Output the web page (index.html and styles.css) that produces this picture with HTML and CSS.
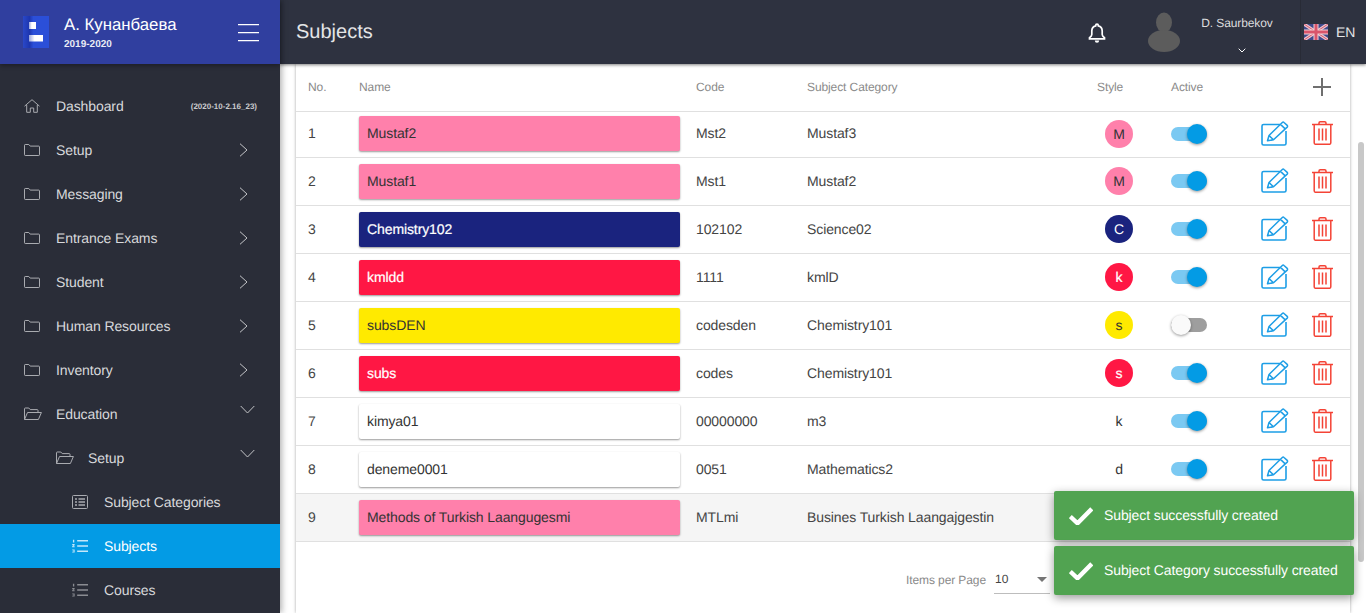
FILE: index.html
```html
<!DOCTYPE html>
<html lang="en">
<head>
<meta charset="utf-8">
<title>Subjects</title>
<link rel="stylesheet" href="styles.css">
</head>
<body>
<svg class="defs" width="0" height="0" aria-hidden="true">
  <symbol id="i-folder" viewBox="0 0 16 12"><path d="M.5 2V1.200C.5.800.8.500 1.200.500h3.600l1.400 1.600h8.600c.4 0 .7.300.7.700v8c0 .4-.3.700-.7.700H1.200c-.4 0-.7-.3-.7-.7z" fill="none" stroke="currentColor"/></symbol>
  <symbol id="i-open" viewBox="0 0 18 13"><path d="M.5 12V1.200C.5.800.8.500 1.200.500h3.600l1.400 1.600h7.100c.4 0 .7.300.7.700V5M.5 12l3-7h13.900l-3 7z" fill="none" stroke="currentColor" stroke-linejoin="round"/></symbol>
  <symbol id="i-chev-r" viewBox="0 0 9 14"><path d="M1 .7 8 7l-7 6.300" fill="none" stroke="currentColor" stroke-width="1"/></symbol>
  <symbol id="i-chev-d" viewBox="0 0 15 9"><path d="M.7 1 7.500 8l6.800-7" fill="none" stroke="currentColor" stroke-width="1"/></symbol>
  <symbol id="i-ol" viewBox="0 0 17 14"><path d="M5.500 1.500H17M5.500 7H17M5.500 12.500H17" stroke="currentColor" stroke-width="1.600" fill="none"/><path d="M1 .3h1.400v3H1zM.2 5h2.600v1.100L1.400 7.200h1.400v1H.2V7.300l1.400-1.200H.2zM.2 10.800h2.600v3.200H.2v-.8h1.600v-.5H.8v-.7h1v-.4H.2z" fill="currentColor"/></symbol>
  <symbol id="i-edit" viewBox="0 0 28 25"><path d="M19 3.500H2.600C1.700 3.500 1 4.200 1 5.100v17.300c0 .9.700 1.600 1.600 1.600h20.800c.9 0 1.600-.7 1.600-1.600V10" fill="none" stroke="currentColor" stroke-width="1.600"/><path d="M6.500 19.800 8 14.500 21.300 1.500c.5-.5 1.200-.5 1.700 0l3.200 2.900c.5.500.5 1.200 0 1.700L12.500 18.800zM8 14.500l4.500 4.300M19.500 3.400l4.700 4.500" fill="none" stroke="currentColor" stroke-width="1.500" stroke-linejoin="round"/></symbol>
  <symbol id="i-trash" viewBox="0 0 21 24"><path d="M0 3.500h21M7 3.500V2.100C7 1.400 7.600.8 8.300.8h4.400c.7 0 1.300.6 1.300 1.300v1.400M2.200 3.500v18.200c0 .9.700 1.600 1.600 1.600h13.400c.9 0 1.600-.7 1.600-1.600V3.500M7 7.500v12M10.500 7.500v12M14 7.500v12" fill="none" stroke="currentColor" stroke-width="1.500"/></symbol>
  <symbol id="i-check" viewBox="0 0 24 18"><path d="M1.300 9.500 8.500 16.300 22.800 1.800" fill="none" stroke="currentColor" stroke-width="4.400"/></symbol>
</svg>

<div class="app">
  <aside class="sidebar">
    <div class="brand">
      <svg class="logo" viewBox="0 0 26 32">
        <defs><linearGradient id="lg" x1="0" x2="1" y1="0" y2="0"><stop offset="0" stop-color="#2a48c8"/><stop offset=".25" stop-color="#1d36b0"/><stop offset=".4" stop-color="#2b4fd8"/></linearGradient>
        <linearGradient id="lw" x1="0" x2="1" y1="0" y2="0"><stop offset="0" stop-color="#9aa6de"/><stop offset=".4" stop-color="#fff"/></linearGradient></defs>
        <rect width="26" height="32" fill="url(#lg)"/>
        <rect x="6" y="6" width="7" height="7" fill="url(#lw)"/>
        <rect x="6" y="19" width="14" height="6.500" fill="url(#lw)"/>
      </svg>
      <div class="brand-text">
        <div class="brand-name">А. Кунанбаева</div>
        <div class="brand-year">2019-2020</div>
      </div>
      <div class="burger"><i></i><i></i><i></i></div>
    </div>
    <nav class="menu">
      <a class="item">
        <svg class="ico" viewBox="0 0 16 14"><path d="M.5 7.200 8 .7l7.500 6.500M2.700 6v7.300h3.600V9h3.400v4.300h3.600V6" fill="none" stroke="currentColor"/></svg>
        <span class="label">Dashboard</span><span class="version">(2020-10-2.16_23)</span>
      </a>
      <a class="item"><svg class="ico"><use href="#i-folder"/></svg><span class="label">Setup</span><svg class="chev-r"><use href="#i-chev-r"/></svg></a>
      <a class="item"><svg class="ico"><use href="#i-folder"/></svg><span class="label">Messaging</span><svg class="chev-r"><use href="#i-chev-r"/></svg></a>
      <a class="item"><svg class="ico"><use href="#i-folder"/></svg><span class="label">Entrance Exams</span><svg class="chev-r"><use href="#i-chev-r"/></svg></a>
      <a class="item"><svg class="ico"><use href="#i-folder"/></svg><span class="label">Student</span><svg class="chev-r"><use href="#i-chev-r"/></svg></a>
      <a class="item"><svg class="ico"><use href="#i-folder"/></svg><span class="label">Human Resources</span><svg class="chev-r"><use href="#i-chev-r"/></svg></a>
      <a class="item"><svg class="ico"><use href="#i-folder"/></svg><span class="label">Inventory</span><svg class="chev-r"><use href="#i-chev-r"/></svg></a>
      <a class="item"><svg class="ico ico-open"><use href="#i-open"/></svg><span class="label">Education</span><svg class="chev-d"><use href="#i-chev-d"/></svg></a>
      <a class="item lvl2"><svg class="ico ico-open"><use href="#i-open"/></svg><span class="label">Setup</span><svg class="chev-d"><use href="#i-chev-d"/></svg></a>
      <a class="item lvl3">
        <svg class="ico" viewBox="0 0 16 14"><rect x=".5" y=".5" width="15" height="13" rx="1" fill="none" stroke="currentColor"/><path d="M3 4h2M6.500 4H13M3 7h2M6.500 7H13M3 10h2M6.500 10H13" stroke="currentColor" stroke-width="1.300"/></svg>
        <span class="label">Subject Categories</span>
      </a>
      <a class="item lvl3 active"><svg class="ico"><use href="#i-ol"/></svg><span class="label">Subjects</span></a>
      <a class="item lvl3"><svg class="ico ol-dim"><use href="#i-ol"/></svg><span class="label">Courses</span></a>
    </nav>
  </aside>

  <div class="main">
    <header class="topbar">
      <h1 class="title">Subjects</h1>
      <svg class="bell" viewBox="0 0 18 20"><path d="M9 1.200a1.300 1.300 0 0 1 1.300 1.300v.4c2.500.6 3.900 2.600 3.900 5.100v3.600c0 1.200.6 2 2.300 3.200v1H1.500v-1c1.700-1.200 2.300-2 2.300-3.200V8c0-2.500 1.400-4.500 3.900-5.100v-.4A1.300 1.300 0 0 1 9 1.200z" fill="none" stroke="currentColor" stroke-width="1.700"/><path d="M6.800 17.500a2.200 2.200 0 0 0 4.400 0z" fill="currentColor"/></svg>
      <svg class="avatar" viewBox="0 0 32 40"><ellipse cx="16" cy="10.500" rx="8" ry="10" fill="#5c5c5c"/><ellipse cx="16" cy="29" rx="16" ry="11" fill="#5c5c5c"/></svg>
      <div class="user">
        <div class="user-name">D. Saurbekov</div>
        <svg class="user-chev" viewBox="0 0 8 5"><path d="M.7.700 4 4 7.300.7" fill="none" stroke="currentColor"/></svg>
      </div>
      <div class="lang">
        <svg class="flag" viewBox="0 0 24 16">
          <rect width="24" height="16" fill="#3e4a8c"/>
          <path d="M0 0l24 16M24 0 0 16" stroke="#f0c4cc" stroke-width="3.200"/>
          <path d="M0 0l24 16M24 0 0 16" stroke="#cf5a6e" stroke-width="1"/>
          <path d="M12 0v16M0 8h24" stroke="#f3d3d8" stroke-width="5"/>
          <path d="M12 0v16M0 8h24" stroke="#d9556b" stroke-width="3"/>
        </svg>
        <span>EN</span>
      </div>
    </header>

    <div class="content">
      <section class="card">
        <table class="table">
          <thead>
            <tr>
              <th class="c-no">No.</th><th class="c-name">Name</th><th class="c-code">Code</th><th class="c-cat">Subject Category</th>
              <th class="c-style">Style</th><th class="c-active">Active</th>
              <th class="c-edit"></th>
              <th class="c-del"><svg class="plus" viewBox="0 0 20 20"><path d="M10 1v18M1 10h18" stroke="currentColor" stroke-width="2"/></svg></th>
            </tr>
          </thead>
          <tbody>
            <tr class="first">
              <td>1</td><td><div class="chip pink">Mustaf2</div></td><td>Mst2</td><td>Mustaf3</td>
              <td><span class="dot pink">M</span></td><td><span class="toggle on"></span></td>
              <td><svg class="edit"><use href="#i-edit"/></svg></td><td><svg class="trash"><use href="#i-trash"/></svg></td>
            </tr>
            <tr>
              <td>2</td><td><div class="chip pink">Mustaf1</div></td><td>Mst1</td><td>Mustaf2</td>
              <td><span class="dot pink">M</span></td><td><span class="toggle on"></span></td>
              <td><svg class="edit"><use href="#i-edit"/></svg></td><td><svg class="trash"><use href="#i-trash"/></svg></td>
            </tr>
            <tr>
              <td>3</td><td><div class="chip navy">Chemistry102</div></td><td>102102</td><td>Science02</td>
              <td><span class="dot navy">C</span></td><td><span class="toggle on"></span></td>
              <td><svg class="edit"><use href="#i-edit"/></svg></td><td><svg class="trash"><use href="#i-trash"/></svg></td>
            </tr>
            <tr>
              <td>4</td><td><div class="chip red">kmldd</div></td><td>1111</td><td>kmlD</td>
              <td><span class="dot red">k</span></td><td><span class="toggle on"></span></td>
              <td><svg class="edit"><use href="#i-edit"/></svg></td><td><svg class="trash"><use href="#i-trash"/></svg></td>
            </tr>
            <tr>
              <td>5</td><td><div class="chip yellow">subsDEN</div></td><td>codesden</td><td>Chemistry101</td>
              <td><span class="dot yellow">s</span></td><td><span class="toggle"></span></td>
              <td><svg class="edit"><use href="#i-edit"/></svg></td><td><svg class="trash"><use href="#i-trash"/></svg></td>
            </tr>
            <tr>
              <td>6</td><td><div class="chip red">subs</div></td><td>codes</td><td>Chemistry101</td>
              <td><span class="dot red">s</span></td><td><span class="toggle on"></span></td>
              <td><svg class="edit"><use href="#i-edit"/></svg></td><td><svg class="trash"><use href="#i-trash"/></svg></td>
            </tr>
            <tr>
              <td>7</td><td><div class="chip">kimya01</div></td><td>00000000</td><td>m3</td>
              <td><span class="dot">k</span></td><td><span class="toggle on"></span></td>
              <td><svg class="edit"><use href="#i-edit"/></svg></td><td><svg class="trash"><use href="#i-trash"/></svg></td>
            </tr>
            <tr>
              <td>8</td><td><div class="chip">deneme0001</div></td><td>0051</td><td>Mathematics2</td>
              <td><span class="dot">d</span></td><td><span class="toggle on"></span></td>
              <td><svg class="edit"><use href="#i-edit"/></svg></td><td><svg class="trash"><use href="#i-trash"/></svg></td>
            </tr>
            <tr class="hover">
              <td>9</td><td><div class="chip pink">Methods of Turkish Laangugesmi</div></td><td>MTLmi</td><td>Busines Turkish Laangajgestin</td>
              <td></td><td></td><td></td><td></td>
            </tr>
          </tbody>
        </table>
        <div class="pager">
          <span class="pager-label">Items per Page</span>
          <span class="pager-select"><span>10</span><i class="caret"></i></span>
        </div>
      </section>
      <div class="scrollbar"><div class="thumb"></div></div>
    </div>
  </div>
</div>

<div class="toasts">
  <div class="toast"><svg class="check"><use href="#i-check"/></svg><span>Subject successfully created</span></div>
  <div class="toast"><svg class="check"><use href="#i-check"/></svg><span>Subject Category successfully created</span></div>
</div>
</body>
</html>
```
FILE: styles.css
```css
* { box-sizing: border-box; }
html, body { margin: 0; height: 100%; overflow: hidden; }
body { font-family: "Liberation Sans", Arial, sans-serif; font-size: 14px; color: #333; background: #fff; text-rendering: geometricPrecision; }
.defs { position: absolute; }

.app { display: flex; height: 613px; }

.sidebar { width: 280px; flex: none; background: #2a2d38; color: #d6d7da; box-shadow: 2px 0 6px rgba(0,0,0,.3); z-index: 3; display: flex; flex-direction: column; }
.brand { height: 64px; flex: none; background: #303f9f; display: flex; align-items: center; padding: 0 21px 0 23px; box-shadow: 0 2px 4px rgba(0,0,0,.3); color: #fff; }
.logo { width: 26px; height: 32px; flex: none; }
.brand-text { margin-left: 15px; flex: 1; }
.brand-name { font-size: 16.8px; line-height: 20px; margin-top: 1px; }
.brand-year { font-size: 10px; font-weight: 700; line-height: 12px; margin-top: 4px; opacity: .9; }
.burger { width: 21px; display: flex; flex-direction: column; gap: 7px; }
.burger i { display: block; height: 1px; background: #fff; box-shadow: 0 .5px 0 rgba(255,255,255,.5); }

.menu { padding-top: 20px; display: flex; flex-direction: column; }
.item { height: 44px; display: flex; align-items: center; padding: 0 23px 0 24px; font-size: 14px; letter-spacing: -.1px; color: #d8d9dc; }
.ico { width: 16px; height: 14px; color: #a9abb0; flex: none; margin-right: 16px; }
.ico-open { width: 18px; margin-right: 14px; }
.ol-dim { color: #8a8c92; }
.label { flex: 1; }
.version { font-size: 8px; font-weight: 700; letter-spacing: 0; color: #c9cacd; }
.chev-r { width: 9px; height: 14px; color: #c4c5c8; margin-right: 9px; }
.chev-d { width: 15px; height: 9px; color: #c4c5c8; margin-top: -9px; margin-right: 2px; }
.lvl2 { padding-left: 56px; }
.lvl3 { padding-left: 72px; }
.active { background: #039be5; color: #fff; }
.active .ico { color: #c6e8fa; }

.main { flex: 1; display: flex; flex-direction: column; min-width: 0; }
.topbar { height: 64px; flex: none; background: #2e3240; color: #fff; display: flex; align-items: center; box-shadow: 0 1px 3px rgba(0,0,0,.5); z-index: 2; padding-left: 16px; }
.title { margin: 1px 0 0; font-size: 20px; font-weight: 400; flex: 1; color: #e4e5e7; }
.bell { width: 18px; height: 20px; margin-right: 42px; color: #fff; margin-top: 2px; }
.avatar { width: 32px; height: 40px; margin-right: 15px; }
.user { width: 84px; display: flex; flex-direction: column; align-items: center; margin-right: 21px; }
.user-name { font-size: 12px; line-height: 14px; margin-top: 5px; letter-spacing: -.1px; color: #dcdcde; white-space: nowrap; }
.user-chev { width: 8px; height: 5px; margin-top: 18px; margin-left: 10px; color: #fff; }
.lang { width: 66px; height: 64px; display: flex; align-items: center; border-left: 1px solid #282b36; padding-left: 3px; font-size: 14px; color: #e4e5e7; gap: 8px; }
.flag { width: 24px; height: 16px; }

.content { flex: 1; display: flex; min-height: 0; padding-left: 16px; background: #fff; }
.card { width: 1054px; flex: none; background: #fff; box-shadow: 0 0 3px rgba(0,0,0,.35); }
.table { width: 100%; border-collapse: collapse; table-layout: fixed; font-size: 14px; letter-spacing: -.1px; color: #444; }
.table th { height: 47px; font-size: 12px; font-weight: 400; color: #8a8a8a; text-align: left; padding: 0; border-bottom: 1px solid #e0e0e0; vertical-align: middle; }
.table td { height: 48px; padding: 0; border-bottom: 1px solid #e0e0e0; vertical-align: middle; }
.table .first td { height: 46px; padding-bottom: 1px; }
.table .first td:nth-child(1), .table .first td:nth-child(3), .table .first td:nth-child(4) { padding-bottom: 2px; }
.table td:first-child, .table th:first-child { padding-left: 12px; }
.table td:nth-child(5) { padding-left: 8px; }
.c-no { width: 63px; }
.c-name { width: 337px; }
.c-code { width: 111px; }
.c-cat { width: 290px; }
.c-style { width: 74px; }
.c-active { width: 90px; }
.c-edit { width: 51px; }
.c-del { width: 38px; }
.plus { width: 20px; height: 20px; color: #6f6f6f; display: block; }
.hover td { background: #f5f5f5; }

.chip { width: 321px; height: 35px; line-height: 35px; padding-left: 8px; border-radius: 2px; background: #fff; box-shadow: 0 1px 2px rgba(0,0,0,.4); color: #333; }
.chip.pink { background: #ff80ab; }
.chip.navy { background: #1a237e; color: #fff; -webkit-text-stroke: .2px #fff; }
.chip.red { background: #ff1744; color: #fff; -webkit-text-stroke: .2px #fff; }
.chip.yellow { background: #ffea00; }

.dot { display: block; width: 28px; height: 28px; line-height: 28px; border-radius: 50%; text-align: center; color: #333; font-size: 14px; }
.dot.pink { background: #ff80ab; }
.dot.navy { background: #1a237e; color: #fff; }
.dot.red { background: #ff1744; color: #fff; -webkit-text-stroke: .2px #fff; }
.dot.yellow { background: #ffea00; }

.toggle { display: block; position: relative; width: 36px; height: 14px; border-radius: 7px; background: #9e9e9e; }
.toggle::after { content: ""; position: absolute; top: -3px; left: 0; width: 20px; height: 20px; border-radius: 50%; background: #fafafa; box-shadow: 0 1px 3px rgba(0,0,0,.4); }
.toggle.on { background: #7bc9f2; }
.toggle.on::after { left: 16px; background: #039be5; }

.edit { display: block; width: 28px; height: 25px; color: #1d9ee6; margin-top: -1px; }
.trash { display: block; width: 21px; height: 24px; color: #f44336; margin-top: -1px; }

.pager { height: 76px; display: flex; align-items: center; padding: 0 0 0 610px; }
.pager-label { font-size: 12px; letter-spacing: -.1px; color: #8a8a8a; margin-right: 8px; }
.pager-select { width: 56px; height: 29px; display: flex; align-items: center; justify-content: space-between; border-bottom: 1px solid #bdbdbd; font-size: 12px; color: #444; padding: 0 3px 0 1px; }
.caret { width: 0; height: 0; border-left: 5px solid transparent; border-right: 5px solid transparent; border-top: 5px solid #757575; }

.scrollbar { flex: 1; padding-left: 8px; }
.thumb { width: 6px; height: 420px; margin-top: 78px; background: #c8c8c8; border-radius: 3px; }

.toasts { position: absolute; left: 1054px; top: 491px; width: 300px; display: flex; flex-direction: column; gap: 6px; z-index: 5; }
.toast { height: 49px; background: #51a351; border-radius: 2px; color: #fff; display: flex; align-items: center; padding-left: 15px; font-size: 14px; letter-spacing: -.1px; box-shadow: 0 3px 10px rgba(0,0,0,.4); }
.toast span { margin-top: -1px; }
.check { width: 24px; height: 18px; margin-right: 11px; color: #fff; }
```
